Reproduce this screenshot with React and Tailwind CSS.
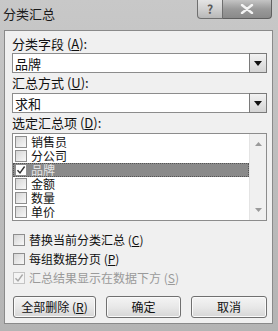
import React from "react";

const font = { fontFamily: '"Noto Sans CJK SC", "Noto Sans", sans-serif' };

function Check({ checked, disabled, className = "" }) {
  return (
    <div
      className={
        "w-[12px] h-[12px] border flex items-center justify-center shrink-0 " +
        (disabled
          ? "border-[#c4c4c4] bg-[#f4f4f4] "
          : "border-[#8e8e8e] bg-gradient-to-br from-[#d6d6d6] to-[#f8f8f8] ") +
        className
      }
    >
      {checked && (
        <svg width="10" height="10" viewBox="0 0 10 10">
          <path
            d="M1.5 5.2 L4 8 L8.6 1.5"
            fill="none"
            stroke={disabled ? "#a8a8a8" : "#333"}
            strokeWidth="1.4"
          />
        </svg>
      )}
    </div>
  );
}

function Combo({ value }) {
  return (
    <div className="h-[20px] w-[255px] border border-[#8c8c8c] bg-white flex items-center">
      <span className="flex-1 pl-[2px] text-[13px] leading-none text-[#111]">{value}</span>
      <div className="w-[18px] h-[20px] -mr-px border border-[#7a7a7a] bg-gradient-to-b from-[#f2f2f2] to-[#d4d4d4] flex items-center justify-center">
        <svg width="8" height="5" viewBox="0 0 8 5">
          <path d="M0 0 H8 L4 5 Z" fill="#111" />
        </svg>
      </div>
    </div>
  );
}

function Row({ label, checked, selected }) {
  return (
    <div
      className={
        "h-[14px] flex items-center gap-[4px] pl-[2px] " +
        (selected ? "bg-[#8a8a8a] outline-1 outline-dotted outline-[#555] -outline-offset-1" : "")
      }
    >
      <Check checked={checked} className={selected ? "bg-none bg-white" : ""} />
      <span
        className={
          "text-[12px] leading-[12px] " + (selected ? "text-[#e6e6e6]" : "text-[#111]")
        }
      >
        {label}
      </span>
    </div>
  );
}

function Btn({ children, w }) {
  return (
    <div
      className={
        "h-[22px] rounded-[3px] border border-[#707070] bg-gradient-to-b from-[#f4f4f4] via-[#e8e8e8] to-[#d6d6d6] flex items-center justify-center text-[12px] text-[#111] shadow-[inset_0_0_0_1px_#fafafa] " +
        w
      }
    >
      {children}
    </div>
  );
}

export default function App() {
  return (
    <div
      style={font}
      className="w-[278px] h-[331px] bg-gradient-to-b from-[#c8c8c8] via-[#bdbdbd] to-[#b4b4b4] flex flex-col overflow-hidden"
    >
      {/* title bar */}
      <div className="h-[30px] flex items-start shrink-0">
        <div className="pl-[3px] pt-[7px] text-[13px] leading-[14px] text-[#1a1a1a] flex-1">
          分类汇总
        </div>
        <div className="flex mr-[6px]">
          <div className="w-[26px] h-[19px] rounded-bl-[4px] border border-t-0 border-[#6f6f6f] bg-gradient-to-b from-[#e4e4e4] via-[#d0d0d0] to-[#b8b8b8] flex items-center justify-center text-[12px] font-bold text-[#5a5a5a] leading-none">
            ?
          </div>
          <div className="w-[49px] h-[19px] rounded-br-[4px] border border-l-0 border-t-0 border-[#5f5f5f] bg-gradient-to-b from-[#c4c4c4] via-[#9a9a9a] to-[#8a8a8a] flex items-center justify-center">
            <svg width="14" height="10" viewBox="0 0 14 10">
              <path d="M2 1 L12 9 M12 1 L2 9" stroke="#f4f4f4" strokeWidth="2.4" strokeLinecap="round" />
            </svg>
          </div>
        </div>
      </div>

      {/* client */}
      <div className="ml-[4px] mr-[5px] h-[294px] border border-[#8a8a8a] bg-[#f0f0f0] pl-[7px] pt-[4px] flex flex-col">
        <div className="h-[18px] text-[13px] leading-[18px] text-[#111]">
          分类字段 (<u>A</u>):
        </div>
        <Combo value="品牌" />
        <div className="h-[20px] text-[13px] leading-[20px] text-[#111]">
          汇总方式 (<u>U</u>):
        </div>
        <Combo value="求和" />
        <div className="h-[20px] text-[13px] leading-[20px] text-[#111]">
          选定汇总项 (<u>D</u>):
        </div>
        <div className="w-[255px] h-[88px] border border-[#8c8c8c] bg-white flex">
          <div className="flex-1 pt-px flex flex-col">
            <Row label="销售员" />
            <Row label="分公司" />
            <Row label="品牌" checked selected />
            <Row label="金额" />
            <Row label="数量" />
            <Row label="单价" />
          </div>
          <div className="w-[17px] bg-[#f0f0f0] border-l border-[#e4e4e4] flex flex-col items-center justify-between py-[8px]">
            <svg width="7" height="4" viewBox="0 0 7 4">
              <path d="M0 4 H7 L3.5 0 Z" fill="#9a9a9a" />
            </svg>
            <svg width="7" height="4" viewBox="0 0 7 4">
              <path d="M0 0 H7 L3.5 4 Z" fill="#9a9a9a" />
            </svg>
          </div>
        </div>

        <div className="mt-[12px] flex flex-col gap-[6px] pl-px">
          <div className="h-[13px] flex items-center gap-[4px]">
            <Check />
            <span className="text-[12px] leading-none text-[#111]">
              替换当前分类汇总 (<u>C</u>)
            </span>
          </div>
          <div className="h-[13px] flex items-center gap-[4px]">
            <Check />
            <span className="text-[12px] leading-none text-[#111]">
              每组数据分页 (<u>P</u>)
            </span>
          </div>
          <div className="h-[13px] flex items-center gap-[4px]">
            <Check checked disabled />
            <span className="text-[12px] leading-none text-[#9a9a9a]">
              汇总结果显示在数据下方 (<u>S</u>)
            </span>
          </div>
        </div>

        <div className="mt-[12px] flex pl-px">
          <Btn w="w-[83px]">
            全部删除 (<u>R</u>)
          </Btn>
          <div className="w-[10px]" />
          <Btn w="w-[75px]">确定</Btn>
          <div className="w-[10px]" />
          <Btn w="w-[76px]">取消</Btn>
        </div>
      </div>
    </div>
  );
}
